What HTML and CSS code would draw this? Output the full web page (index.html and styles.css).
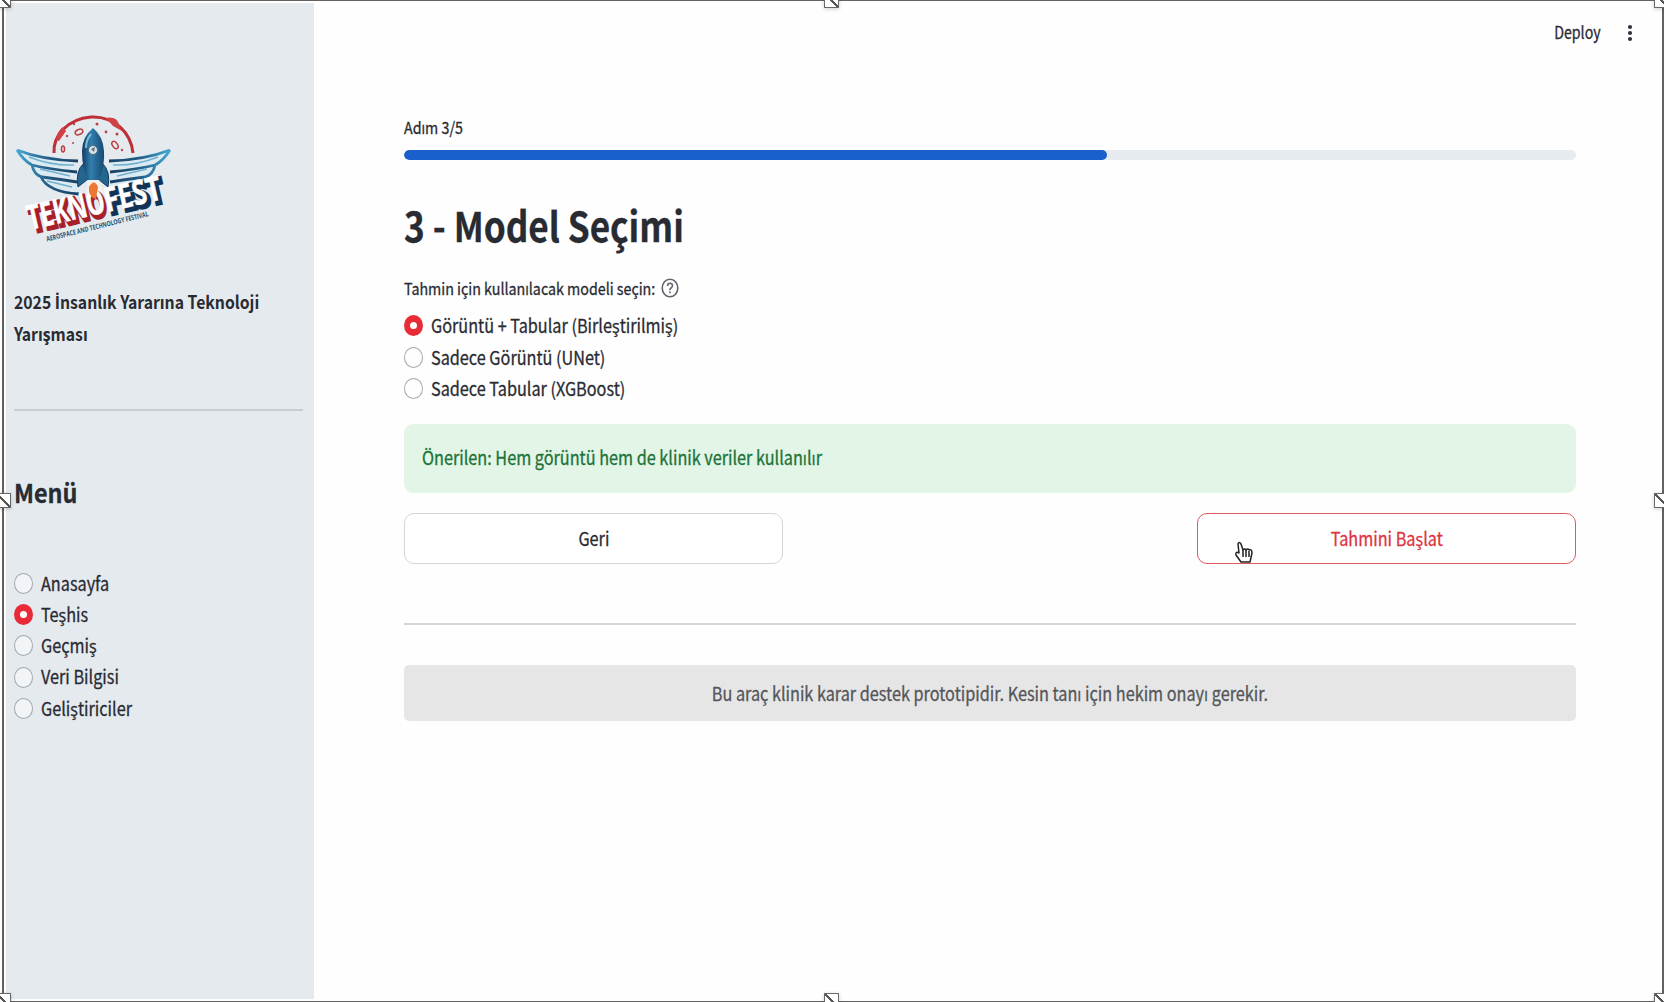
FILE: index.html
```html
<!DOCTYPE html>
<html lang="tr">
<head>
<meta charset="utf-8">
<title>Model Seçimi</title>
<link rel="stylesheet" href="styles.css">
</head>
<body>
<div class="frame">
  <aside class="sidebar">
    <svg class="logo" width="160" height="140" viewBox="14 112 160 140">
      <defs>
        <linearGradient id="body" x1="0" x2="1"><stop offset="0" stop-color="#123a62"/><stop offset=".4" stop-color="#327fae"/><stop offset="1" stop-color="#174873"/></linearGradient>
        <linearGradient id="wing" x1="0" x2="1"><stop offset="0" stop-color="#45a8d0"/><stop offset=".5" stop-color="#245c86"/><stop offset="1" stop-color="#1a405f"/></linearGradient>
      </defs>
      <path d="M54 153C53 136 67 119 91 117C115 116 131 133 133 153" fill="none" stroke="#bd3038" stroke-width="3"/>
      <path d="M56 140q1-9 7-13l3 4-7 10zM106 118q10-2 13 6l3 7-9-5z" fill="#cf4144"/>
      <g fill="none" stroke="#bd3d45" stroke-width="1.5"><ellipse cx="79" cy="132" rx="4" ry="2.5" transform="rotate(-25 79 132)"/><ellipse cx="115" cy="145" rx="2.5" ry="4" transform="rotate(-35 115 145)"/><ellipse cx="63" cy="149" rx="1.5" ry="3"/></g>
      <g fill="#b7434a"><circle cx="67" cy="136" r="1.2"/><circle cx="74" cy="124" r="1.2"/><circle cx="97" cy="124" r="1.5"/><circle cx="106" cy="132" r="1.4"/><circle cx="117" cy="134" r="1.5"/><circle cx="73" cy="143" r="1"/><circle cx="122" cy="150" r="1.2"/></g>
      <g id="leftWing">
        <path d="M17 150L77 161L79 195Q54 193 43 183L36 174L30 166Z" fill="#dceaf2"/>
        <path d="M17 150Q42 160 78 161M17 150Q24 161 32 165Q48 169 77 172M32 165Q34 175 42 177Q58 179 77 182M41 177Q48 192 79 194" fill="none" stroke="url(#wing)" stroke-width="2.8"/>
        <path d="M29 157Q52 166 74 165M40 169L70 176M47 181L72 187" fill="none" stroke="#70b1cf" stroke-width="1.5"/>
      </g>
      <use href="#leftWing" transform="translate(187 0) scale(-1 1)"/>
      <path d="M84 163Q75 171 78 187L88 179M102 163Q111 171 108 187L98 179" fill="#256691" stroke="#143a5e"/>
      <path d="M93 128Q82 137 82 151Q82 169 88 180H99Q105 166 104 151Q103 136 93 128Z" fill="url(#body)"/>
      <path d="M91 134Q86 140 86 148" fill="none" stroke="#76bddb" stroke-width="2"/>
      <circle cx="93" cy="150" r="4.5" fill="#d9e0e3" stroke="#486d83"/>
      <path d="M91 149l4-2-1 5z" fill="#567485"/>
      <path d="M88 180h11l5 13-10 10-8-11z" fill="#f4f0ec"/>
      <g class="wordmark" transform="translate(30 230) rotate(-13)">
        <text class="side-red" x="3" y="3" textLength="77" lengthAdjust="spacingAndGlyphs">TEKNO</text>
        <text class="side-blue" x="82" y="3" textLength="57" lengthAdjust="spacingAndGlyphs">FEST</text>
        <text class="face-red" x="0" y="0" textLength="79" lengthAdjust="spacingAndGlyphs">TEKNO</text>
        <text class="face-blue" x="79" y="0" textLength="58" lengthAdjust="spacingAndGlyphs">FEST</text>
      </g>
      <path d="M89 187Q94 178 98 187L96 199Q88 197 89 187Z" fill="#ed7632"/>
      <text class="tagline" transform="translate(47 241.500) rotate(-14)" textLength="105" lengthAdjust="spacingAndGlyphs">AEROSPACE AND TECHNOLOGY FESTIVAL</text>
    </svg>
    <p class="event"><span class="t">2025 <span class="dotted">İ</span>nsanlık Yararına Teknoloji</span><br><span class="t">Yarışması</span></p>
    <hr class="side-rule">
    <h2 class="menu-title"><span class="t">Menü</span></h2>
    <div class="radios">
      <div class="option"><i class="radio"></i><span class="t">Anasayfa</span></div>
      <div class="option"><i class="radio on"></i><span class="t">Teşhis</span></div>
      <div class="option"><i class="radio"></i><span class="t">Geçmiş</span></div>
      <div class="option"><i class="radio"></i><span class="t">Veri Bilgisi</span></div>
      <div class="option"><i class="radio"></i><span class="t">Geliştiriciler</span></div>
    </div>
  </aside>
  <main class="main">
    <header class="topbar">
      <span class="t deploy">Deploy</span>
      <svg width="6" height="18" viewBox="0 0 6 18" fill="#31333f"><circle cx="3" cy="3" r="2.1"/><circle cx="3" cy="9" r="2.1"/><circle cx="3" cy="15" r="2.1"/></svg>
    </header>
    <div class="step"><span class="t">Adım 3/5</span></div>
    <div class="track"><div class="fill" style="width:60%"></div></div>
    <h1 class="title"><span class="t">3 - Model Seçimi</span></h1>
    <div class="question">
      <span class="t">Tahmin için kullanılacak modeli seçin:</span>
      <svg class="help" width="18" height="20" viewBox="0 0 18 20" fill="none" stroke="#62646c" stroke-width="1.6"><ellipse cx="9" cy="10" rx="7.8" ry="8.8"/><path d="M6.5 8Q6.6 5.3 9 5.3T11.5 7.7Q11.4 9 10 10T9 12.2M9 13.6v1.7"/></svg>
    </div>
    <div class="radios">
      <div class="option"><i class="radio on"></i><span class="t">Görüntü + Tabular (Birleştirilmiş)</span></div>
      <div class="option"><i class="radio"></i><span class="t">Sadece Görüntü (UNet)</span></div>
      <div class="option"><i class="radio"></i><span class="t">Sadece Tabular (XGBoost)</span></div>
    </div>
    <div class="notice"><span class="t">Önerilen: Hem görüntü hem de klinik veriler kullanılır</span></div>
    <div class="actions">
      <button class="btn"><span class="t">Geri</span></button>
      <button class="btn primary"><span class="t">Tahmini Başlat</span></button>
    </div>
    <hr class="rule">
    <footer class="disclaimer"><span class="t">Bu araç klinik karar destek prototipidir. Kesin tanı için hekim onayı gerekir.</span></footer>
  </main>
</div>
<svg class="cursor" width="20" height="23" viewBox="0 0 20 23" fill="#fff" stroke="#222" stroke-width="1.5" stroke-linejoin="round"><path d="M5 12L4 3Q5 0 7 3L9 9Q11 7 12 9Q14 7 15 9Q18 8 18 12L16 21H7L2 14Q1 10 5 12Z"/><path d="M9 9v7M12 9v7M15 10v6"/></svg>
<div class="edge"></div>
<i class="handle tl"></i><i class="handle tc"></i><i class="handle tr"></i>
<i class="handle ml"></i><i class="handle mr"></i>
<i class="handle bl"></i><i class="handle bc"></i><i class="handle br"></i>
</body>
</html>
```
FILE: styles.css
```css
* { box-sizing: border-box; }
body {
  margin: 0; width: 1664px; height: 1002px; overflow: hidden; position: relative;
  background: #fefefe; color: #292b33;
  font-family: "Noto Sans CJK SC", "Open Sans", sans-serif;
  font-size: 18.8px; line-height: 31.3px;
}
h1, h2, p, hr { margin: 0; border: 0; }
.t { display: inline-block; white-space: nowrap; transform: scaleX(.864); transform-origin: left center; -webkit-text-stroke: .3px currentColor; }
.frame { display: flex; height: 1002px; padding: 3px 0 3px 6px; }
.sidebar { width: 308px; flex: none; padding: 109px 11px 0 8px; background: #e5eaee; }
.logo { display: block; overflow: visible; }
.event { margin-top: 34px; font-weight: 700; font-size: 18px; line-height: 31.6px; }
.event .t { transform: scaleX(.875); -webkit-text-stroke: 0; }
.dotted { font-family: "Open Sans", sans-serif; line-height: 1; }
.side-rule { height: 2px; margin-top: 59.4px; background: #c9cdd3; }
.menu-title { margin-top: 65px; font-size: 26px; line-height: 32px; }
.menu-title .t { transform: scaleX(.9); }
.menu-title + .radios { margin-top: 60px; }
.option { display: flex; align-items: center; gap: 8px; height: 31.3px; }
.option .t { margin-top: -2px; }
.radio { flex: none; width: 19px; height: 21px; border: 1.5px solid #a4a8ae; border-radius: 50%; background: #f2f5f8; }
.main .radio { background: #fefefe; }
.radio.on, .main .radio.on { border: 6px solid #e72c37; border-width: 7px 6px; background: #fff; }
.main { flex: 1; padding: 0 88px 0 90.4px; }
.topbar { display: flex; justify-content: flex-end; align-items: center; gap: 26px; height: 60px; margin-right: -57px; font-size: 17px; }
.topbar .t { transform-origin: right center; transform: scaleX(.835); margin-top: -2px; }
.step { margin-top: 49px; font-size: 16.5px; line-height: 30px; }
.track { height: 10px; margin-top: 8px; border-radius: 5px; background: #e6ebef; overflow: hidden; }
.fill { height: 100%; border-radius: 5px; background: #1a60cc; }
.title { margin-top: 35px; font-size: 41px; line-height: 58px; }
.title .t { transform: scaleX(.857); }
.question { display: flex; align-items: center; margin-top: 19.6px; font-size: 16.5px; }
.question .help { margin-left: -34px; }
.main .radios { margin-top: 6.4px; }
.notice { display: flex; align-items: center; height: 69px; margin-top: 19.8px; padding: 0 0 3px 18px; border-radius: 9px; background: #e2f5e6; color: #1c7338; }
.actions { display: flex; justify-content: space-between; margin-top: 20px; }
.btn { width: 379px; height: 51px; padding: 0 0 2px; border: 1.5px solid #d5d6da; border-radius: 10px; background: #fff; color: inherit; font: inherit; line-height: 31px; }
.btn .t, .disclaimer .t { transform-origin: center; }
.btn.primary { border-color: #df5960; color: #de343d; }
.rule { height: 2px; margin-top: 59px; background: #d4d5d8; }
.disclaimer { display: flex; align-items: center; justify-content: center; height: 56px; margin-top: 40px; border-radius: 5px; background: #e6e6e6; color: #54565a; }
.wordmark text { font: 700 34px "Open Sans", sans-serif; }
.side-red { fill: #a61f2b; stroke: #a61f2b; stroke-width: 4.5; }
.side-blue { fill: #123355; stroke: #123355; stroke-width: 4.5; }
.face-red { fill: #fff; stroke: #fff; stroke-width: .4; }
.face-blue { fill: #fff; stroke: #fff; stroke-width: .4; }
.tagline { font: 700 7px "Open Sans", sans-serif; fill: #245172; }
.cursor { position: absolute; left: 1234px; top: 541px; }
.edge { position: absolute; inset: 0 0 0 2px; border: 2px solid #626262; border-width: 1px 2px 1px 2px; pointer-events: none; }
.handle { position: absolute; width: 15px; height: 15px; border: 1px solid #686868; background: linear-gradient(45deg, #fff 45%, #555 46%, #555 54%, #fff 55%); box-shadow: 0 1px 4px #0003; }
.tl, .ml, .bl { left: -4px; }
.tc, .bc { left: 824px; }
.tr, .mr, .br { left: 1654px; }
.tl, .tc, .tr { top: -7px; }
.ml, .mr { top: 493px; }
.bl, .bc, .br { top: 993px; }
```
